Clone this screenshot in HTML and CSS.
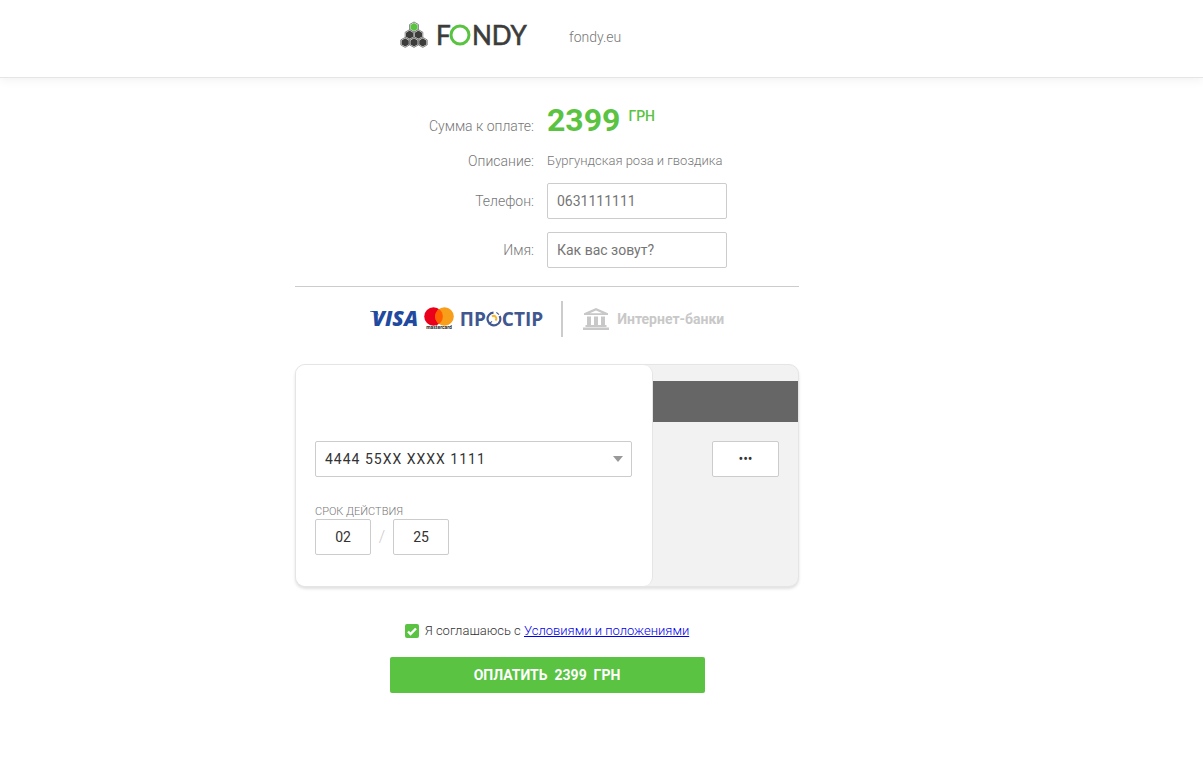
FILE: index.html
```html
<!DOCTYPE html>
<html lang="ru">
<head>
    <meta charset="UTF-8">
    <meta name="viewport" content="width=device-width, initial-scale=1.0">
    <title>FONDY</title>
    <link rel="stylesheet" href="styles.css">
</head>
<body>
    <header class="header">
        <div class="container header-inner">
            <div class="logo">
                <svg class="logo-icon" width="28" height="28" viewBox="0 0 28 28">
                    <defs>
                        <g id="cell">
                            <path d="M0-5 4.4-2.5V2.5L0 5-4.4 2.5V-2.5Z" fill="#fff" stroke="#666" stroke-width=".8"/>
                            <path d="M0-4.1 3.6-2V2L0 4.1-3.6 2V-2Z"/>
                        </g>
                    </defs>
                    <use href="#cell" x="14" y="6" fill="#5ac341"/>
                    <g fill="#3c3c3b">
                        <use href="#cell" x="9.6" y="13.7"/>
                        <use href="#cell" x="18.4" y="13.7"/>
                        <use href="#cell" x="5.2" y="21.4"/>
                        <use href="#cell" x="14" y="21.4"/>
                        <use href="#cell" x="22.8" y="21.4"/>
                    </g>
                </svg>
                <svg class="logo-text" width="92" height="40" viewBox="0 0 92 40" aria-label="FONDY">
                    <text x="0" y="30">F</text>
                    <circle cx="24" cy="20" r="9" fill="none" stroke="#5ac341" stroke-width="3"/>
                    <text x="36" y="30">NDY</text>
                </svg>
            </div>
            <span class="site">fondy.eu</span>
        </div>
    </header>

    <main class="container">
        <form class="form">
            <div class="order">
                <span class="label label-sum">Сумма к оплате:</span>
                <div class="amount">2399 <span class="currency">ГРН</span></div>
                <span class="label">Описание:</span>
                <span class="description">Бургундская роза и гвоздика</span>
                <label class="label" for="phone">Телефон:</label>
                <input class="field" type="tel" id="phone" placeholder="0631111111">
                <label class="label" for="name">Имя:</label>
                <input class="field" type="text" id="name" placeholder="Как вас зовут?">
            </div>

            <div class="methods">
                <button class="method cards" type="button">
                    <svg class="visa" width="48" height="34" viewBox="0 0 48 34">
                        <path d="M0 9h7l2 5C7 11 4 10 0 9.6Z"/>
                        <text x="2" y="24">VISA</text>
                    </svg>
                    <svg class="mastercard" width="30" height="24" viewBox="0 0 30 24">
                        <circle cx="9.5" cy="9.5" r="9.3" fill="#eb001b"/>
                        <circle cx="20.5" cy="9.5" r="9.3" fill="#f79e1b"/>
                        <path d="M15 2a9.3 9.3 0 0 1 0 15 9.3 9.3 0 0 1 0-15Z" fill="#ff5f00"/>
                        <text class="mastercard-text" x="15" y="22" text-anchor="middle">mastercard</text>
                    </svg>
                    <span class="prostir">ПР<svg width="16" height="16" viewBox="0 0 16 16" fill="none">
                        <path d="M7.5 1.6A6.4 6.4 0 1 0 13.6 5" stroke="#40578f" stroke-width="2.2"/>
                        <path d="M6 5.6A2.6 2.6 0 1 1 9.4 9.6" stroke="#f5b82e" stroke-width="2"/>
                        <path d="M2.6 13.4 6 10.4M10.4 1.4 13 3.6" stroke="#40578f" stroke-width="1.2"/>
                    </svg>СТІР</span>
                </button>
                <button class="method banks" type="button">
                    <svg width="26" height="22" viewBox="0 0 26 22" fill="#c8c8c8">
                        <path d="M13 0 25 5.2V7H1V5.2ZM13 2.4 6.8 5.2H19.2Z" fill-rule="evenodd"/>
                        <path d="M4 8.5h4V17H4ZM11 8.5h4V17h-4ZM18 8.5h4V17h-4ZM2.5 17h21v2h-21ZM0 19.5h26V22H0Z"/>
                    </svg>
                    <span>Интернет-банки</span>
                </button>
            </div>

            <div class="card">
                <div class="card-front">
                    <select class="field card-number" aria-label="Номер карты">
                        <option>4444 55XX XXXX 1111</option>
                    </select>
                    <label class="expiry-label" for="month">СРОК ДЕЙСТВИЯ</label>
                    <div class="expiry">
                        <input class="field short" type="text" id="month" value="02">
                        <span class="slash">/</span>
                        <input class="field short" type="text" value="25" aria-label="Год">
                    </div>
                </div>
                <div class="card-back">
                    <div class="stripe"></div>
                    <input class="field cvv" type="password" value="111" aria-label="CVV">
                </div>
            </div>

            <div class="terms">
                <input class="check" type="checkbox" id="agree" checked>
                <label for="agree">Я соглашаюсь с <a href="#">Условиями и положениями</a></label>
            </div>
            <button class="pay" type="submit">ОПЛАТИТЬ&nbsp; 2399&nbsp; ГРН</button>
        </form>
    </main>
</body>
</html>
```
FILE: styles.css
```css
* {
    box-sizing: border-box;
}
body {
    margin: 0;
    background: #fff;
    color: #777;
    font-family: Roboto, "Liberation Sans", sans-serif;
    font-size: 14px;
    font-weight: 300;
    line-height: 18px;
}
input, select, button {
    font-family: inherit;
    font-size: 14px;
}
.container {
    max-width: 613px;
    margin: 0 auto;
}
.header {
    border-bottom: 1px solid #e5e5e5;
    box-shadow: 0 2px 10px rgba(0, 0, 0, 0.06);
}
.header-inner {
    display: flex;
    align-items: center;
    gap: 41px;
    height: 77px;
    padding: 0 0 4px 105px;
}
.logo {
    display: flex;
    align-items: center;
    gap: 8px;
    padding-bottom: 3px;
}
.logo-text {
    fill: #3c3c3b;
    font-family: Lato, sans-serif;
    font-size: 26px;
    font-weight: 400;
}
.logo-text text {
    stroke: #3c3c3b;
    stroke-width: 0.6px;
}
.form {
    display: flex;
    flex-direction: column;
    max-width: 504px;
    padding-top: 23px;
}
.order {
    display: grid;
    grid-template-columns: 239px 180px;
    column-gap: 13px;
    row-gap: 13px;
    align-items: center;
    padding-bottom: 18px;
    border-bottom: 1px solid #ccc;
}
.label {
    text-align: right;
}
.label-sum {
    padding-top: 12px;
}
.amount {
    color: #5ac341;
    font-size: 32px;
    font-weight: 700;
    line-height: 38px;
}
.currency {
    font-size: 14px;
    font-weight: 500;
    vertical-align: 10px;
    line-height: 14px;
}
.description {
    font-size: 13px;
}
.field {
    height: 36px;
    padding: 0 9px;
    border: 1px solid #ccc;
    border-radius: 2px;
    background: #fff;
    color: #333;
    font-weight: 400;
}
.field::placeholder {
    color: #757575;
}
.methods {
    display: flex;
    justify-content: center;
    padding: 14px 0 27px;
}
.method {
    display: flex;
    align-items: center;
    height: 36px;
    padding: 0;
    border: 0;
    background: none;
}
.cards {
    gap: 6px;
    padding-right: 18px;
    border-right: 2px solid #ccc;
}
.visa {
    fill: #1f4aa0;
    font-family: "Open Sans", sans-serif;
    font-size: 21px;
    font-style: italic;
    font-weight: 800;
}
.mastercard-text {
    fill: #222;
    font-size: 5px;
    font-weight: 700;
}
.prostir {
    display: flex;
    align-items: center;
    color: #40578f;
    font-family: "Open Sans", sans-serif;
    font-size: 19px;
    font-weight: 700;
}
.banks {
    gap: 8px;
    padding-left: 20px;
    color: #c8c8c8;
    font-weight: 700;
}
.card {
    display: flex;
    border: 1px solid #e5e5e5;
    border-radius: 10px;
    background: #f2f2f2;
    box-shadow: 0 2px 3px rgba(0, 0, 0, 0.12);
}
.card-front {
    flex: 1;
    padding: 76px 20px 31px 19px;
    border-right: 1px solid #e5e5e5;
    border-radius: 9px;
    background: #fff;
}
.card-number {
    display: block;
    width: 100%;
    appearance: none;
    background: #fff url("data:image/svg+xml,%3Csvg xmlns='http://www.w3.org/2000/svg' viewBox='0 0 10 6'%3E%3Cpath d='M0 0h10L5 6z' fill='%23999'/%3E%3C/svg%3E") no-repeat right 8px center / 10px 6px;
    letter-spacing: 1px;
}
.expiry-label {
    display: block;
    margin-top: 28px;
    font-size: 11px;
    line-height: 14px;
}
.expiry {
    display: flex;
    align-items: center;
}
.short {
    width: 56px;
    text-align: center;
}
.slash {
    width: 22px;
    color: #ccc;
    font-size: 16px;
    text-align: center;
}
.card-back {
    display: flex;
    flex-direction: column;
    width: 145px;
    padding-top: 16px;
}
.stripe {
    height: 41px;
    background: #666;
}
.cvv {
    align-self: flex-end;
    width: 67px;
    margin: 19px 19px 0 0;
    text-align: center;
}
.terms {
    display: flex;
    justify-content: center;
    align-items: center;
    gap: 6px;
    margin-top: 35px;
    color: #333;
    font-size: 13px;
}
.terms a {
    color: #00e;
}
.check {
    width: 14px;
    height: 14px;
    margin: 0;
    appearance: none;
    border-radius: 2px;
    background: #5ac341;
}
.check:checked {
    background: #5ac341 url("data:image/svg+xml,%3Csvg xmlns='http://www.w3.org/2000/svg' viewBox='0 0 14 14'%3E%3Cpath d='M3 7.5 5.5 10 11 4.5' fill='none' stroke='%23fff' stroke-width='2.4'/%3E%3C/svg%3E");
}
.pay {
    align-self: center;
    width: 100%;
    max-width: 315px;
    height: 36px;
    margin-top: 17px;
    border: 0;
    border-radius: 2px;
    background: #5ac341;
    color: #fff;
    font-weight: 700;
}
```
